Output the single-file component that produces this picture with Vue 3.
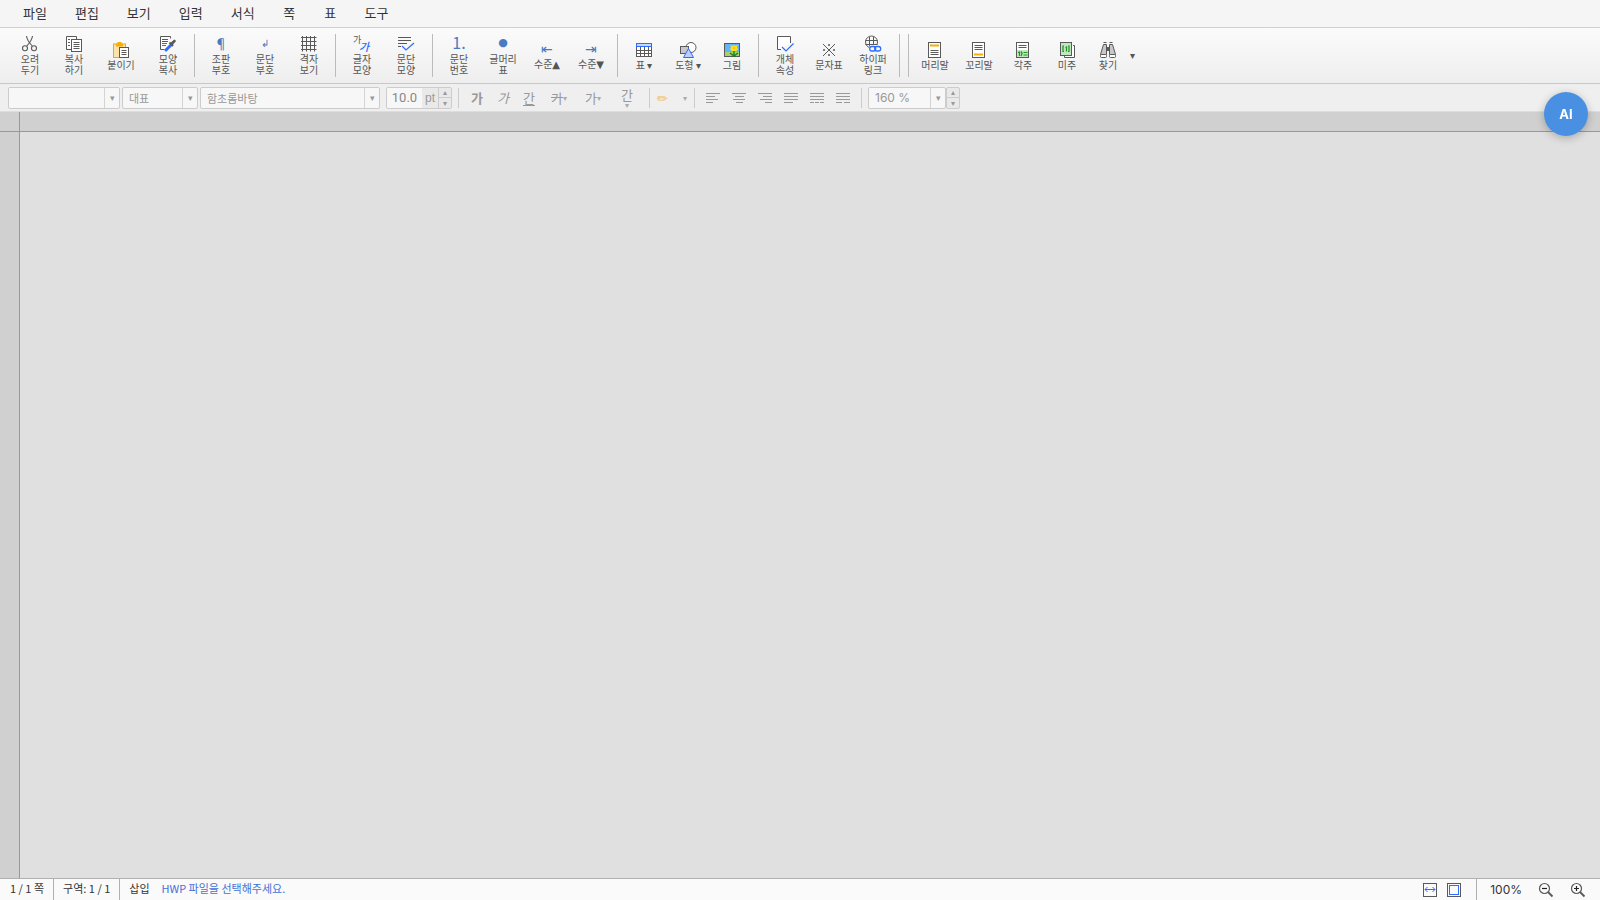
<script setup>
const menus = ['파일', '편집', '보기', '입력', '서식', '쪽', '표', '도구']

const G = '#595959'
const B = '#2f6bff'
const doc = `<rect x="2.5" y="1.5" width="12" height="15" fill="#fff" stroke="${G}"/>`
const icons = {
  cut: `<g fill="none" stroke="${G}" stroke-width="1.1"><path d="M5.5 1C6 5 8 7.500 11.200 11M11.500 1C11 5 9 7.500 5.800 11"/><circle cx="4" cy="13.200" r="2.500"/><circle cx="13" cy="13.200" r="2.500"/></g>`,
  copy: `<g fill="#fff" stroke="${G}"><path d="M6 14.500H1.500V1.500H11.500V4"/><path d="M3 4.500h2M3 7.500h2M3 10.500h2"/><rect x="6.500" y="4.500" width="10" height="12"/><path d="M8.500 7.500h6M8.500 9.500h6M8.500 11.500h6M8.500 13.500h6"/></g>`,
  paste: `<rect x="1.500" y="3" width="12" height="13.500" fill="#fde3a8" stroke="#f0a90c"/><path d="M4 2.500h7v3H4z" fill="#f5ad0c"/><rect x="5.500" y="1" width="4" height="2" fill="#f5ad0c"/><rect x="7.500" y="6.500" width="9" height="10" fill="#fff" stroke="${G}"/><path d="M9.500 9.500h5M9.500 11.500h5M9.500 13.500h5" stroke="${G}"/>`,
  dropper: `<path d="M11.500 3.500v-2h-10v13h4" fill="#fff" stroke="${G}"/><path d="M3 4.500h6M3 6.500h6" stroke="${G}"/><path d="M3 8.500h5M3 10.500h4" stroke="${B}"/><path d="M13 9L7 15" stroke="${B}" stroke-width="3" stroke-linecap="round"/><path d="M10.500 7.500l3.500 3.500M12.500 8.500L16 5.500" stroke="${G}" stroke-width="2"/><path d="M12.500 7l3-2.500 1.500 1.500-2.500 3z" fill="${G}"/>`,
  grid: `<path d="M2.500 1v15.500M6.500 1v15.500M10.500 1v15.500M14.500 1v15.500M1 2.500h15.500M1 6.500h15.500M1 10.500h15.500M1 14.500h15.500" stroke="${G}"/>`,
  char: `<text x="0" y="8" font-size="9" fill="${G}">가</text><text x="6" y="16" font-size="11" font-style="italic" font-weight="500" fill="${B}">가</text>`,
  para: `<path d="M1 2.500h13M1 5.500h13M1 8.500h9M1 11.500h3" stroke="${G}" stroke-width="1.1"/><path d="M5 11l4 4 8-7" fill="none" stroke="${B}" stroke-width="1.200"/>`,
  table: `<rect x="1.500" y="2.500" width="15" height="13" fill="#fff" stroke="${G}"/><path d="M5.500 6v9.500M9.500 6v9.500M13.500 6v9.500M1 9.500h16M1 12.500h16" stroke="${G}"/><rect x="1.500" y="2.500" width="15" height="3" fill="#c5d6ff" stroke="${B}"/>`,
  shape: `<circle cx="12" cy="6.500" r="5" fill="#fff" stroke="${G}"/><rect x="1.500" y="5.500" width="8" height="7" fill="#c8c8c8" stroke="${G}"/><path d="M9.500 7.500l5 9h-10z" fill="#bcd0ff" stroke="${B}"/>`,
  image: `<rect x="1.500" y="2.500" width="15" height="13" fill="#63b5f5" stroke="${G}"/><path d="M2 11h14v4H2z" fill="#a4d468"/><path d="M11 9v6M7 12l4 3 4-3" stroke="#178a17" stroke-width="1.500" fill="none"/><path d="M7.500 4l2 1 1.500-1 1.500 1 2-1-.5 2.500 1 2-2 1.500h-4l-2-1.500 1-2z" fill="#ffdf20"/><circle cx="11" cy="7" r="1.200" fill="#ffc400"/>`,
  object: `<path d="M5 14.500H1.500V1.500H14.500V8" fill="#fff" stroke="${G}"/><path d="M6 12l4 4 7.500-7.500" fill="none" stroke="${B}" stroke-width="1.200"/>`,
  symbol: `<path d="M3 3l12 12M15 3L3 15" stroke="${G}"/><g fill="${G}"><circle cx="9" cy="4" r="1"/><circle cx="9" cy="14" r="1"/><circle cx="4" cy="9" r="1"/><circle cx="14" cy="9" r="1"/></g>`,
  link: `<g fill="none" stroke="${G}"><circle cx="7.500" cy="7" r="6"/><path d="M1.500 5.500h12M1.500 9.500h12M5.500 2v11M9.500 2v11"/></g><rect x="5" y="10" width="13" height="7" rx="3" fill="#fafafa"/><g fill="none" stroke="${B}" stroke-width="1.300"><rect x="5.700" y="11.500" width="6" height="4.500" rx="2.200"/><rect x="10.700" y="11.500" width="6" height="4.500" rx="2.200"/></g>`,
  header: `${doc}<path d="M4 4.500h9" stroke="#f5ad0c" stroke-width="2"/><path d="M4.500 9.500h8M4.500 11.500h8M4.500 13.500h8" stroke="${G}"/>`,
  footer: `${doc}<path d="M4.500 4.500h8M4.500 6.500h8M4.500 8.500h8" stroke="${G}"/><path d="M4 13.500h9" stroke="#f5ad0c" stroke-width="2"/>`,
  footnote: `${doc}<path d="M4.500 4.500h8M4.500 6.500h8" stroke="${G}"/><path d="M3 9h11v7H3z" fill="#c2e6c2"/><path d="M4 11.500l1.500-.5v4M7 10.500q2 2 0 4.500M9.500 11.500h4M9.500 14h4" fill="none" stroke="#1c931c" stroke-width="1.200"/>`,
  endnote: `<path d="M15 4.500h1.500v12h-10V15" fill="#fff" stroke="${G}"/><rect x="2.500" y="1.500" width="11" height="13" fill="#c2e6c2" stroke="${G}"/><path d="M6 5H5v5.500h1M10 5h1v5.500h-1M7.500 6.500l1-.5v4.500" fill="none" stroke="#1c931c" stroke-width="1.200"/>`,
  find: `<path d="M4.500 1.500h3M10.500 1.500h3M4.500 3.500h3V13.500h-6zM10.500 3.500h3l3 10h-6z" fill="#c8c8c8" stroke="${G}"/><path d="M7.500 6h3v4h-3z" fill="${G}"/><rect x="1.500" y="13.500" width="6" height="3" rx="1" fill="#fff" stroke="${G}"/><rect x="10.500" y="13.500" width="6" height="3" rx="1" fill="#fff" stroke="${G}"/>`,
}

const groups = [
  [
    { t: ['오려', '두기'], i: 'cut' },
    { t: ['복사', '하기'], i: 'copy' },
    { t: ['붙이기'], i: 'paste', c: 'wide' },
    { t: ['모양', '복사'], i: 'dropper' },
  ],
  [
    { t: ['조판', '부호'], g: '¶', c: 'pilcrow' },
    { t: ['문단', '부호'], g: '↲', c: 'return' },
    { t: ['격자', '보기'], i: 'grid' },
  ],
  [
    { t: ['글자', '모양'], i: 'char' },
    { t: ['문단', '모양'], i: 'para' },
  ],
  [
    { t: ['문단', '번호'], g: '1.', c: 'number' },
    { t: ['글머리', '표'], g: '●', c: 'bullet' },
    { t: ['수준▲'], g: '⇤', c: 'level' },
    { t: ['수준▼'], g: '⇥', c: 'level' },
  ],
  [
    { t: ['표 ▾'], i: 'table' },
    { t: ['도형 ▾'], i: 'shape' },
    { t: ['그림'], i: 'image' },
  ],
  [
    { t: ['개체', '속성'], i: 'object' },
    { t: ['문자표'], i: 'symbol' },
    { t: ['하이퍼', '링크'], i: 'link' },
  ],
  [],
  [
    { t: ['머리말'], i: 'header' },
    { t: ['꼬리말'], i: 'footer' },
    { t: ['각주'], i: 'footnote' },
    { t: ['미주'], i: 'endnote' },
    { t: ['찾기'], i: 'find', c: 'narrow' },
  ],
]

const aligns = [
  { n: '왼쪽 정렬', d: 'M0 1.500h14M0 4.500h9M0 7.500h12M0 10.500h7' },
  { n: '가운데 정렬', d: 'M0 1.500h14M3 4.500h9M1 7.500h12M4 10.500h7' },
  { n: '오른쪽 정렬', d: 'M0 1.500h14M5 4.500h9M2 7.500h12M7 10.500h7' },
  { n: '양쪽 정렬', d: 'M0 1.500h14M0 4.500h14M0 7.500h14M0 10.500h9' },
  { n: '배분 정렬', d: 'M0 1.500h14M0 4.500h14M0 7.500h14M0 10.500h4M5 10.500h4M10 10.500h4' },
  { n: '나눔 정렬', d: 'M0 1.500h14M0 4.500h14M0 7.500h14M0 10.500h6M8 10.500h6' },
]
</script>

<template>
  <div class="app">
    <nav class="menu">
      <button v-for="m in menus" :key="m" type="button">{{ m }}</button>
    </nav>

    <div class="tools" role="toolbar" aria-label="도구 상자">
      <template v-for="(group, gi) in groups" :key="gi">
        <span v-if="gi" class="divider"></span>
        <button v-for="b in group" :key="b.t[0] + b.t[1]" type="button" class="tool" :class="b.c">
          <svg v-if="b.i" width="18" height="18" viewBox="0 0 18 18" aria-hidden="true" v-html="icons[b.i]"></svg>
          <span v-else class="glyph">{{ b.g }}</span>
          <span class="label"><span v-for="l in b.t" :key="l">{{ l }}</span></span>
        </button>
      </template>
      <button type="button" class="more" aria-label="더 보기">▾</button>
    </div>

    <div class="format" role="toolbar" aria-label="서식">
      <span class="combo style"><select disabled aria-label="스타일"><option></option></select><i>▾</i></span>
      <span class="combo lang"><select disabled aria-label="언어"><option>대표</option></select><i>▾</i></span>
      <span class="combo font"><select disabled aria-label="글꼴"><option>함초롬바탕</option></select><i>▾</i></span>
      <span class="size">
        <input id="font-size" type="text" value="10.0" disabled aria-label="글자 크기">
        <label for="font-size">pt</label>
        <span class="spin"><button type="button" disabled aria-label="크게">▴</button><button type="button" disabled aria-label="작게">▾</button></span>
      </span>
      <span class="bar after-size"></span>
      <button type="button" class="fmt bold" disabled>가</button>
      <button type="button" class="fmt italic" disabled>가</button>
      <button type="button" class="fmt under" disabled>간</button>
      <button type="button" class="fmt drop" disabled><s>가</s><small>▾</small></button>
      <button type="button" class="fmt drop" disabled><span>가</span><small>▾</small></button>
      <button type="button" class="fmt color" disabled><span>간</span><small>▾</small></button>
      <span class="bar"></span>
      <button type="button" class="fmt pencil" disabled aria-label="형광펜">✏</button>
      <button type="button" class="fmt arrow" disabled aria-label="형광펜 색"><small>▾</small></button>
      <span class="bar"></span>
      <button v-for="a in aligns" :key="a.n" type="button" class="fmt align" disabled :aria-label="a.n">
        <svg width="14" height="12" viewBox="0 0 14 12"><path :d="a.d" stroke="currentColor" /></svg>
      </button>
      <span class="bar before-spacing"></span>
      <span class="combo spacing"><select disabled aria-label="줄 간격"><option>160 %</option></select><i>▾</i></span>
      <span class="spin boxed"><button type="button" disabled aria-label="넓게">▴</button><button type="button" disabled aria-label="좁게">▾</button></span>
    </div>

    <main class="work">
      <div class="corner"></div>
      <div class="ruler-h"></div>
      <div class="ruler-v"></div>
      <div class="canvas"></div>
    </main>

    <footer class="status">
      <span class="cell">1 / 1 쪽</span>
      <span class="cell">구역: 1 / 1</span>
      <span class="cell last">삽입</span>
      <span class="message">HWP 파일을 선택해주세요.</span>
      <div class="view">
        <button type="button" aria-label="폭 맞춤">
          <svg width="14" height="14" viewBox="0 0 14 14" fill="none"><rect x=".5" y=".5" width="13" height="13" stroke="#595959" /><path d="M2 6.500h10M4.500 4L2 6.500 4.500 9M9.500 4L12 6.500 9.500 9" stroke="#2f6bff" /></svg>
        </button>
        <button type="button" aria-label="쪽 맞춤">
          <svg width="14" height="14" viewBox="0 0 14 14" fill="none"><rect x=".5" y=".5" width="13" height="13" stroke="#595959" /><rect x="2.500" y="2.500" width="9" height="9" stroke="#2f6bff" /></svg>
        </button>
      </div>
      <div class="zoom">
        <output>100%</output>
        <button type="button" aria-label="축소">
          <svg width="16" height="16" viewBox="0 0 16 16" fill="none" stroke="#595959"><circle cx="6.500" cy="6.500" r="5" stroke-width="1.200" /><path d="M4 6.500h5" stroke="#222" stroke-width="1.200" /><path d="M10 10l4.500 4.500" stroke-width="1.800" /></svg>
        </button>
        <button type="button" aria-label="확대">
          <svg width="16" height="16" viewBox="0 0 16 16" fill="none" stroke="#595959"><circle cx="6.500" cy="6.500" r="5" stroke-width="1.200" /><path d="M4 6.500h5M6.500 4v5" stroke="#222" stroke-width="1.200" /><path d="M10 10l4.500 4.500" stroke-width="1.800" /></svg>
        </button>
      </div>
    </footer>

    <button type="button" class="ai">AI</button>
  </div>
</template>

<style>
body {
  margin: 0;
}
</style>

<style scoped>
.app {
  display: flex;
  flex-direction: column;
  height: 100vh;
  overflow: hidden;
  background: #e0e0e0;
  color: #333;
  font-family: "Noto Sans CJK KR", "Noto Sans", sans-serif;
  font-size: 13px;
}
.app * {
  box-sizing: border-box;
}
button,
select,
input {
  margin: 0;
  padding: 0;
  border: 0;
  background: none;
  color: inherit;
  font: inherit;
}
.menu {
  display: flex;
  flex: none;
  height: 28px;
  padding: 0 9px 2px;
  background: #f5f5f5;
  border-bottom: 1px solid #d0d0d0;
}
.menu button {
  min-width: 41px;
  padding: 0 14px;
  line-height: 25px;
}
.tools {
  display: flex;
  align-items: center;
  flex: none;
  height: 56px;
  padding: 0 8px 1px;
  background: linear-gradient(#fbfbfb, #eee);
  border-bottom: 1px solid #c8c8c8;
}
.divider {
  width: 1px;
  height: 43px;
  margin: 0 4px;
  background: #bbb;
}
.tool {
  display: flex;
  flex-direction: column;
  align-items: center;
  width: 44px;
  color: #555;
}
.tool svg {
  overflow: visible;
}
.tool.wide {
  width: 50px;
}
.tool.narrow {
  width: 38px;
}
.label {
  display: flex;
  flex-direction: column;
  font-size: 10px;
  line-height: 11px;
  white-space: nowrap;
}
.glyph {
  height: 18px;
  line-height: 16px;
  font-size: 14px;
  color: #4a7abf;
}
.number .glyph {
  font-size: 16px;
  line-height: 14px;
}
.bullet .glyph {
  font-family: "DejaVu Sans", sans-serif;
  font-size: 11px;
}
.level .glyph {
  line-height: 14px;
}
.level .label {
  font-family: "DejaVu Sans", "Noto Sans CJK KR", sans-serif;
}
.return .glyph {
  font-size: 10px;
}
.more {
  width: 10px;
  color: #555;
  font-size: 10px;
  line-height: 14px;
}
.format {
  display: flex;
  align-items: center;
  flex: none;
  height: 28px;
  padding: 0 8px;
  background: #efefef;
  border-bottom: 1px solid #ddd;
  color: #999;
  font-size: 12px;
}
.combo {
  position: relative;
  height: 22px;
  margin-right: 2px;
  border: 1px solid #ccc;
  border-radius: 2px;
  background: #f7f7f7;
}
.combo select {
  width: 100%;
  height: 20px;
  padding: 0 20px 0 6px;
  appearance: none;
  opacity: 1;
  font-size: 11px;
}
.combo i {
  position: absolute;
  top: 0;
  right: 0;
  width: 15px;
  height: 20px;
  border-left: 1px solid #d4d4d4;
  font-size: 9px;
  font-style: normal;
  line-height: 20px;
  text-align: center;
  pointer-events: none;
}
.style {
  width: 112px;
}
.lang {
  width: 76px;
}
.font {
  width: 180px;
}
.combo.spacing {
  width: 78px;
  margin-right: 0;
}
.spacing select {
  font-family: Inter, sans-serif;
  font-size: 12px;
}
.size {
  display: flex;
  height: 22px;
  margin-left: 4px;
  border: 1px solid #ccc;
  border-radius: 2px;
  background: #e9e9e9;
  overflow: hidden;
}
.size input {
  width: 35px;
  background: #f7f7f7;
  color: #888;
  text-align: center;
  font-family: Roboto, sans-serif;
  font-size: 13px;
}
.size label {
  width: 16px;
  line-height: 20px;
  text-align: center;
  font-family: "Liberation Sans", sans-serif;
  font-size: 12px;
}
.spin {
  display: flex;
  flex-direction: column;
  width: 13px;
  border-left: 1px solid #ccc;
  background: #e9e9e9;
}
.spin button {
  flex: 1;
  min-height: 0;
  font-size: 8px;
  line-height: 8px;
}
.spin button + button {
  border-top: 1px solid #ccc;
}
.spin.boxed {
  width: 14px;
  height: 22px;
  border: 1px solid #ccc;
  border-radius: 2px;
}
.bar {
  width: 1px;
  height: 20px;
  margin: 0 5px;
  background: #ccc;
}
.after-size {
  margin-left: 6px;
}
.before-spacing {
  margin-right: 6px;
}
.fmt {
  display: flex;
  align-items: center;
  justify-content: center;
  width: 26px;
  height: 22px;
  font-size: 13px;
  line-height: 18px;
}
.fmt small {
  color: #aaa;
  font-size: 8px;
}
.bold {
  font-weight: 700;
}
.italic {
  font-style: italic;
}
.under {
  text-decoration: underline;
  text-underline-offset: 2px;
}
.drop {
  width: 34px;
}
.color {
  flex-direction: column;
  width: 34px;
}
.color span {
  line-height: 14px;
}
.color small {
  line-height: 6px;
}
.pencil {
  width: 14px;
  color: #f2c16b;
}
.arrow {
  width: 8px;
  margin-left: 12px;
}
.work {
  display: grid;
  flex: 1;
  grid-template-columns: 20px 1fr;
  grid-template-rows: 20px 1fr;
  min-height: 0;
}
.corner,
.ruler-h,
.ruler-v {
  background: #d0d0d0;
}
.corner,
.ruler-v {
  border-right: 1px solid #999;
}
.corner,
.ruler-h {
  border-bottom: 1px solid #999;
}
.status {
  display: flex;
  flex: none;
  height: 22px;
  border-top: 1px solid #b0b0b0;
  background: #fafafa;
  font-size: 11px;
  line-height: 19px;
}
.cell {
  padding: 0 9px 0 10px;
  border-right: 1px solid #b0b0b0;
}
.cell + .cell {
  padding: 0 9px;
}
.cell.last {
  border: 0;
}
.message {
  padding-left: 3px;
  color: #4472d8;
}
.view {
  display: flex;
  align-items: center;
  gap: 10px;
  margin-left: auto;
  padding-right: 15px;
  border-right: 1px solid #b0b0b0;
}
.zoom {
  display: flex;
  align-items: center;
  gap: 16px;
  padding: 0 14px 0 13px;
}
.zoom output {
  font-family: Inter, sans-serif;
  font-size: 12px;
}
.view button,
.zoom button {
  display: flex;
}
.ai {
  position: fixed;
  top: 92px;
  right: 12px;
  width: 44px;
  height: 44px;
  border-radius: 50%;
  background: #4a90e2;
  box-shadow: 0 2px 8px rgba(0, 0, 0, .25);
  color: #fff;
  font-family: Inter, sans-serif;
  font-weight: 700;
}
</style>
